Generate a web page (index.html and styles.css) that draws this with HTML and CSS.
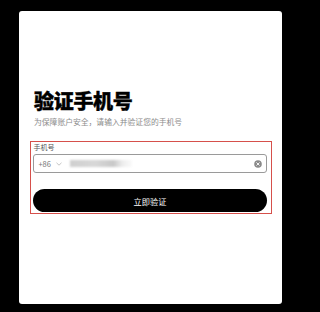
FILE: index.html
```html
<!DOCTYPE html>
<html lang="zh-CN">
<head>
<meta charset="utf-8">
<link rel="stylesheet" href="styles.css">
</head>
<body>
<div class="card">
  <h1 class="title">验证手机号</h1>
  <p class="subtitle">为保障账户安全，请输入并验证您的手机号</p>
  <div class="frame">
    <div class="label">手机号</div>
    <div class="input">
      <span class="code">+86</span>
      <svg class="chev" width="6" height="4" viewBox="0 0 6 4"><path d="M0.5 0.8 L3 3.2 L5.5 0.8" fill="none" stroke="#aaa" stroke-width="0.7"/></svg>
      <span class="blur"></span>
      <svg class="clear" width="8" height="8" viewBox="0 0 8 8"><circle cx="4" cy="4" r="3.8" fill="#8a8a8a"/><path d="M2.7 2.7 L5.3 5.3 M5.3 2.7 L2.7 5.3" stroke="#fff" stroke-width="0.9" stroke-linecap="round"/></svg>
    </div>
    <button class="btn">立即验证</button>
  </div>
</div>
</body>
</html>
```
FILE: styles.css
```css
html, body {
  margin: 0;
  padding: 0;
  background: #000;
}
body {
  width: 298px;
  height: 312px;
  overflow: hidden;
  font-family: "Noto Sans CJK SC", "Noto Sans", sans-serif;
}
.card {
  box-sizing: border-box;
  margin: 11px 0 0 19px;
  width: 263px;
  height: 293px;
  background: #fff;
  border-radius: 3px;
  padding: 80px 16px 0 15px;
}
.title {
  margin: 0;
  font-size: 20px;
  line-height: 20px;
  font-weight: 900;
  -webkit-text-stroke: 0.4px #000;
  color: #000;
  letter-spacing: -0.3px;
}
.subtitle {
  margin: 6px 0 0;
  font-size: 7.8px;
  line-height: 10px;
  color: #8c8c8c;
}
.frame {
  box-sizing: border-box;
  margin: 14px 0 0 -4px;
  width: 242px;
  border: 1.6px solid #d6504b;
  padding: 1px 4.4px 1px 2.4px;
}
.label {
  font-size: 7px;
  line-height: 9px;
  color: #555;
}
.input {
  box-sizing: border-box;
  margin-top: 2px;
  height: 19px;
  border: 1px solid #9a9a9a;
  border-radius: 3px;
  display: flex;
  align-items: center;
  padding: 0 4px 0 4px;
}
.code {
  font-size: 7.5px;
  color: #777;
  line-height: 10px;
}
.chev {
  margin-left: 5px;
}
.blur {
  margin-left: 8px;
  width: 62px;
  height: 7px;
  background: linear-gradient(90deg, #cfcfcf 0%, #d8d8d8 40%, #c8c8c8 70%, #eeeeee 85%, #fafafa 100%);
  filter: blur(1px);
}
.clear {
  margin-left: auto;
}
.btn {
  display: block;
  box-sizing: border-box;
  margin-top: 16px;
  width: 100%;
  height: 23px;
  border: 0;
  border-radius: 12px;
  background: #000;
  color: #fff;
  font-family: "Noto Sans CJK SC", "Noto Sans", sans-serif;
  font-size: 8.2px;
  padding: 0;
}
```
